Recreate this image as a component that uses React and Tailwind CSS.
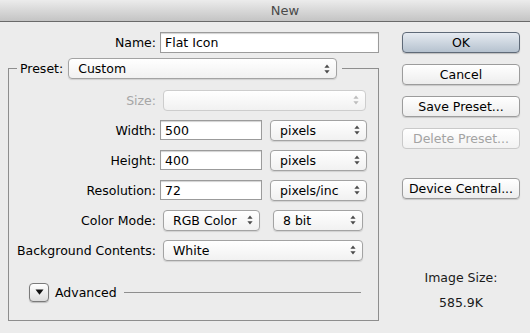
import React from "react";

const font = { fontFamily: '"DejaVu Sans", "Liberation Sans", sans-serif' };

function Arrows({ disabled }) {
  const c = disabled ? "#bdbdbd" : "#4a4a4a";
  return (
    <svg width="6" height="10" viewBox="0 0 6 10" className="shrink-0">
      <path d="M3 0.5 L5.6 3.8 L0.4 3.8 Z" fill={c} />
      <path d="M3 9.5 L5.6 6.2 L0.4 6.2 Z" fill={c} />
    </svg>
  );
}

function Popup({ children, w, disabled, className = "" }) {
  return (
    <div
      style={{ width: w }}
      className={
        "h-[21px] flex items-center justify-between pl-[9px] pr-[6px] rounded-[4px] border bg-gradient-to-b from-white to-[#f1f1f1] whitespace-nowrap " +
        (disabled
          ? "border-[#cdcdcd] shadow-none"
          : "border-[#a3a3a3] shadow-[0_1px_1px_rgba(0,0,0,0.12)]") +
        " " +
        className
      }
    >
      <span className="block leading-[15px]">{children}</span>
      <Arrows disabled={disabled} />
    </div>
  );
}

function Field({ value, w }) {
  return (
    <div
      style={{ width: w }}
      className="h-[20px] flex items-center pl-[4px] bg-white border border-[#9b9b9b] shadow-[inset_0_1px_1px_rgba(0,0,0,0.18)] leading-[15px]"
    >
      {value}
    </div>
  );
}

function Button({ children, primary, disabled, className = "" }) {
  let cls =
    "w-[118px] h-[21px] flex items-center justify-center rounded-[4px] border leading-[15px] ";
  if (primary)
    cls +=
      "border-[#5f6a78] bg-gradient-to-b from-[#e6ebf1] to-[#b6c2cf] shadow-[0_1px_1px_rgba(0,0,0,0.2)] text-black";
  else if (disabled)
    cls += "border-[#c9c9c9] bg-gradient-to-b from-white to-[#f2f2f2] text-[#a3a3a3]";
  else
    cls +=
      "border-[#9c9c9c] bg-gradient-to-b from-white to-[#ededed] shadow-[0_1px_1px_rgba(0,0,0,0.15)] text-black";
  return <div className={cls + " " + className}>{children}</div>;
}

function Row({ label, dim, children }) {
  return (
    <div className="h-[30px] flex items-center">
      <div
        className={
          "w-[139px] text-right leading-[15px] " +
          (dim ? "text-[#a6a6a6]" : "text-black")
        }
      >
        {label}
      </div>
      <div className="flex items-center ml-[4px]">{children}</div>
    </div>
  );
}

export default function App() {
  return (
    <div
      style={font}
      className="w-[530px] h-[333px] bg-[#ececec] overflow-hidden text-[12.5px] text-black"
    >
      <div className="h-[22px] flex items-center justify-center pl-[40px] border-b border-[#6a6a6a] bg-gradient-to-b from-[#ececec] to-[#c4c4c4] text-[13px] text-[#4a4a4a]">
        New
      </div>
      <div className="flex pt-[10px]">
        <div className="w-[402px]">
          <div className="h-[21px] flex items-center">
            <div className="w-[156px] text-right leading-[15px]">Name:</div>
            <div className="ml-[4px]">
              <div className="w-[219px] h-[21px] flex items-center pl-[4px] bg-white border border-[#9b9b9b] shadow-[inset_0_1px_1px_rgba(0,0,0,0.18)] leading-[15px]">
                Flat Icon
              </div>
            </div>
          </div>
          <fieldset className="mt-[5px] ml-[8px] w-[371px] border border-[#8e8e8e] pl-[8px] pt-[6px] pb-[13px]">
            <legend className="px-[3px] pr-[5px]">
              <span className="flex items-center gap-[5px]">
                <span className="leading-[15px]">Preset:</span>
                <Popup w="269px">Custom</Popup>
              </span>
            </legend>
            <Row label="Size:" dim>
              <Popup w="203px" disabled className="ml-[3px] h-[20px]">
                {" "}
              </Popup>
            </Row>
            <Row label="Width:">
              <Field value="500" w="102px" />
              <Popup w="97px" className="ml-[8px]">pixels</Popup>
            </Row>
            <Row label="Height:">
              <Field value="400" w="102px" />
              <Popup w="97px" className="ml-[8px]">pixels</Popup>
            </Row>
            <Row label="Resolution:">
              <Field value="72" w="102px" />
              <Popup w="97px" className="ml-[8px]">
                <span className="block w-[60px] overflow-hidden">pixels/inc</span>
              </Popup>
            </Row>
            <Row label="Color Mode:">
              <Popup w="97px" className="ml-[3px] h-[20px]">RGB Color</Popup>
              <Popup w="90px" className="ml-[13px] h-[20px]">8 bit</Popup>
            </Row>
            <Row label="Background Contents:">
              <Popup w="200px" className="ml-[3px] h-[20px]">White</Popup>
            </Row>
            <div className="mt-[12px] h-[30px] flex items-center">
              <div className="ml-[12px] w-[20px] h-[19px] rounded-[4px] border border-[#7a7a7a] bg-gradient-to-b from-white to-[#dcdcdc] shadow-[0_1px_1px_rgba(0,0,0,0.2)] flex items-center justify-center">
                <svg width="9" height="6" viewBox="0 0 9 6">
                  <path d="M0.5 0.5 H8.5 L4.5 5.8 Z" fill="#111" />
                </svg>
              </div>
              <span className="ml-[6px] leading-[15px]">Advanced</span>
              <div className="flex-1 ml-[7px] mr-[17px] h-px bg-[#8e8e8e]" />
            </div>
          </fieldset>
        </div>
        <div className="w-[118px] flex flex-col">
          <Button primary>OK</Button>
          <Button className="mt-[11px]">Cancel</Button>
          <Button className="mt-[11px]">Save Preset...</Button>
          <Button disabled className="mt-[11px]">Delete Preset...</Button>
          <Button className="mt-[29px]">Device Central...</Button>
          <div className="mt-[71px] h-[16px] leading-[16px] text-center text-[#1a1a1a]">
            Image Size:
          </div>
          <div className="mt-[9px] h-[16px] leading-[16px] text-center text-[#1a1a1a]">
            585.9K
          </div>
        </div>
      </div>
    </div>
  );
}
